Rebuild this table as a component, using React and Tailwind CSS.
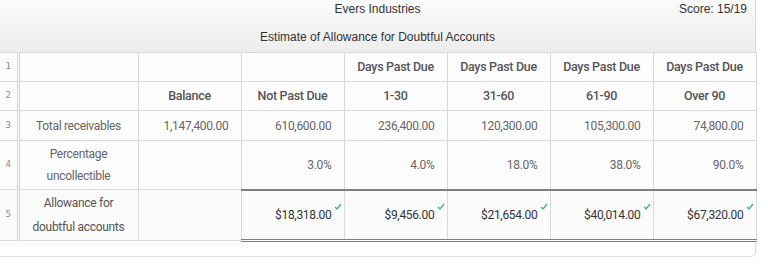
import React from "react";

const cols = [18, 120, 103, 103, 103, 103, 103, 103];

const headTop = ["", "", "", "Days Past Due", "Days Past Due", "Days Past Due", "Days Past Due"];
const headSub = ["", "Balance", "Not Past Due", "1-30", "31-60", "61-90", "Over 90"];
const totals = ["1,147,400.00", "610,600.00", "236,400.00", "120,300.00", "105,300.00", "74,800.00"];
const pcts = ["", "3.0%", "4.0%", "18.0%", "38.0%", "90.0%"];
const allowances = ["$18,318.00", "$9,456.00", "$21,654.00", "$40,014.00", "$67,320.00"];

const Check = () => (
  <svg width="8" height="7" viewBox="0 0 8 7" className="absolute -right-[10px] top-[-5px]">
    <path d="M1 4 L3 6 L7 1" fill="none" stroke="#4cb37a" strokeWidth="1.4" />
  </svg>
);

const RowNum = ({ n }) => (
  <td className="border-r-[3px] border-r-[#d4d4d4] border-double border-b border-b-[#d9d9d9] text-center align-middle text-[9px] text-[#888] font-['DejaVu_Sans_Mono',monospace] tracking-normal">
    {n}
  </td>
);

export default function App() {
  return (
    <div className="w-[756px] h-[257px] bg-white border-r border-b border-[#dcdcdc] rounded-br-[5px] font-['Liberation_Sans',Arial,sans-serif]">
      <div className="relative h-[52px] bg-gradient-to-b from-[#fbfbfb] to-[#ededed] text-[12px] text-[#333] text-center">
        <div className="pt-[2px] leading-[14px]">Evers Industries</div>
        <div className="pt-[14px] leading-[14px]">Estimate of Allowance for Doubtful Accounts</div>
        <div className="absolute right-[8px] top-[2px] leading-[14px]">Score: 15/19</div>
      </div>
      <table className="table-fixed border-collapse w-[756px] text-[12px] font-['Roboto',sans-serif] tracking-[-0.3px]">
        <colgroup>
          {cols.map((w, i) => (
            <col key={i} style={{ width: w }} />
          ))}
        </colgroup>
        <tbody>
          <tr className="h-[29px] bg-[#fdfdfd] border-t border-[#d9d9d9]">
            <RowNum n={1} />
            {headTop.map((t, i) => (
              <td key={i} className="border border-[#d9d9d9] text-center font-medium text-[#555] text-[12.5px]">
                {t}
              </td>
            ))}
          </tr>
          <tr className="h-[29px] bg-[#fdfdfd]">
            <RowNum n={2} />
            {headSub.map((t, i) => (
              <td key={i} className="border border-[#d9d9d9] text-center font-medium text-[#555] text-[12.5px]">
                {t}
              </td>
            ))}
          </tr>
          <tr className="h-[30px] bg-[#fdfdfd]">
            <RowNum n={3} />
            <td className="border border-[#d9d9d9] text-center text-[#666]">Total receivables</td>
            {totals.map((t, i) => (
              <td key={i} className="border border-[#d9d9d9] text-right pr-[12px] text-[#666]">
                {t}
              </td>
            ))}
          </tr>
          <tr className="h-[49px] bg-[#fdfdfd]">
            <RowNum n={4} />
            <td className="border border-[#d9d9d9] text-center leading-[22px] text-[#666]">
              Percentage
              <br />
              uncollectible
            </td>
            {pcts.map((t, i) => (
              <td key={i} className="border border-[#d9d9d9] text-right pr-[12px] text-[#666]">
                {t}
              </td>
            ))}
          </tr>
          <tr className="h-[51px] bg-[#fbfbfb]">
            <RowNum n={5} />
            <td className="border border-[#d9d9d9] text-center leading-[24px] text-[#555]">
              Allowance for
              <br />
              doubtful accounts
            </td>
            <td className="border border-[#d9d9d9]"></td>
            {allowances.map((t, i) => (
              <td
                key={i}
                className="border border-[#d9d9d9] border-t-2 border-t-[#808080] border-b-[3px] border-b-[#808080] [border-bottom-style:double] text-right pr-[12px] text-[#333]"
              >
                <span className="relative">
                  {t}
                  <Check />
                </span>
              </td>
            ))}
          </tr>
        </tbody>
      </table>
    </div>
  );
}
